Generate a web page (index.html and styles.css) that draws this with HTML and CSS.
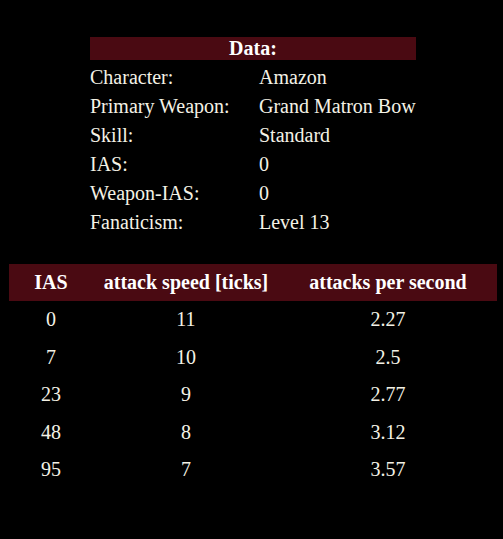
FILE: index.html
```html
<!DOCTYPE html>
<html>
<head>
<meta charset="utf-8">
<link rel="stylesheet" href="styles.css">
</head>
<body>
<div class="page">
  <section class="data">
    <div class="data-head">Data:</div>
    <div class="data-row"><span class="label">Character:</span><span>Amazon</span></div>
    <div class="data-row"><span class="label">Primary Weapon:</span><span>Grand Matron Bow</span></div>
    <div class="data-row"><span class="label">Skill:</span><span>Standard</span></div>
    <div class="data-row"><span class="label">IAS:</span><span>0</span></div>
    <div class="data-row"><span class="label">Weapon-IAS:</span><span>0</span></div>
    <div class="data-row"><span class="label">Fanaticism:</span><span>Level 13</span></div>
  </section>
  <section class="speed">
    <div class="speed-row speed-head"><span>IAS</span><span>attack speed [ticks]</span><span>attacks per second</span></div>
    <div class="speed-row"><span>0</span><span>11</span><span>2.27</span></div>
    <div class="speed-row"><span>7</span><span>10</span><span>2.5</span></div>
    <div class="speed-row"><span>23</span><span>9</span><span>2.77</span></div>
    <div class="speed-row"><span>48</span><span>8</span><span>3.12</span></div>
    <div class="speed-row"><span>95</span><span>7</span><span>3.57</span></div>
  </section>
</div>
</body>
</html>
```
FILE: styles.css
```css
html, body {
  margin: 0;
  padding: 0;
  background: #000;
}
body {
  color: #f4f2e6;
  font-family: "Liberation Serif", "Times New Roman", serif;
  font-size: 20px;
}
.page {
  padding: 37px 6px 0 9px;
}
.data {
  width: 326px;
  margin-left: 81px;
}
.data-head {
  background: #4a0a12;
  color: #fff;
  font-weight: bold;
  text-align: center;
  height: 23px;
  line-height: 23px;
}
.data-row {
  display: grid;
  grid-template-columns: 169px 1fr;
  height: 29px;
  line-height: 29px;
  padding-top: 3px;
  margin-bottom: -3px;
}
.speed {
  margin-top: 30px;
  width: 488px;
}
.speed-row {
  display: grid;
  grid-template-columns: 84px 186px 1fr;
  text-align: center;
  height: 37.5px;
  line-height: 37.5px;
}
.speed-head {
  background: #4a0a12;
  color: #fff;
  font-weight: bold;
  height: 37px;
  line-height: 37px;
}
```
